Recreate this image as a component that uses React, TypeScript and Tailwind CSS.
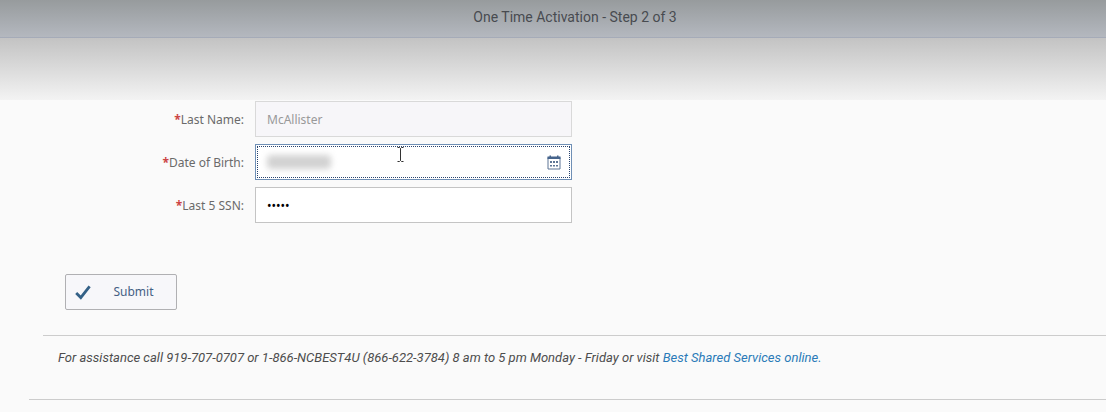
import React, { useState } from 'react';

const fieldClass = 'block h-9 w-full border px-[11px] text-xs';

interface FormRowProps {
  id: string;
  label: string;
  children: React.ReactNode;
}

const FormRow: React.FC<FormRowProps> = ({ id, label, children }) => (
  <div className="flex items-center gap-[11px]">
    <label htmlFor={id} className="w-[244px] shrink-0 pt-px text-right text-xs text-[#6a6a6a]">
      <span className="font-bold text-[#cc4444]">*</span>
      {label}
    </label>
    <div className="relative w-full max-w-[317px]">{children}</div>
  </div>
);

const CalendarIcon: React.FC = () => (
  <svg width="14" height="15" viewBox="0 0 14 15" fill="none" aria-hidden="true">
    <path d="M1 2.5h12v11.5H1z" stroke="#5d7595" />
    <path d="M.5 1.5h13v2.5H.5zM2.5 .5h1.5v1H2.5zM10 .5h1.5v1H10z" fill="#46648c" />
    <path
      d="M3 6h2v2H3zM6 6h2v2H6zM9 6h2v2H9zM3 10h2v1.5H3zM6 10h2v1.5H6zM9 10h2v1.5H9z"
      fill="#5d7595"
    />
  </svg>
);

const CheckIcon: React.FC = () => (
  <svg width="16" height="15" viewBox="0 0 16 15" fill="none" aria-hidden="true">
    <path d="M1.2 8 5.8 12.6 14.6 1.4" stroke="#346187" strokeWidth="2.8" />
  </svg>
);

const TextCursor: React.FC = () => (
  <svg
    className="pointer-events-none absolute left-[142px] top-[3px]"
    width="7"
    height="15"
    viewBox="0 0 7 15"
    fill="none"
    aria-hidden="true"
  >
    <path d="M.5 .5h2l1 1 1-1h2M.5 14.5h2l1-1 1 1h2M3.5 1.5v12" stroke="#333333" />
  </svg>
);

export default function App() {
  const [birthDate, setBirthDate] = useState('');
  const [ssn, setSsn] = useState('12345');

  return (
    <div className="min-h-screen bg-[#fafafa] font-['Noto_Sans','Liberation_Sans',sans-serif]">
      <header className="flex h-[38px] items-center justify-center border-b border-[#a5abb8] bg-linear-to-b from-[#979b9d] to-[#b4b8bf] pb-1 pl-11">
        <h1 className="font-['Roboto','Liberation_Sans',sans-serif] text-sm text-[#484b50]">
          One Time Activation - Step 2 of 3
        </h1>
      </header>
      <div className="h-[62px] bg-linear-to-b from-[#c3c3c3] to-[#f3f3f3]" />

      <main>
        <form onSubmit={(e) => e.preventDefault()}>
          <div className="flex flex-col gap-[7px] pt-px">
            <FormRow id="lastName" label="Last Name:">
              <input
                id="lastName"
                type="text"
                value="McAllister"
                disabled
                className={`${fieldClass} border-[#d9d9d9] bg-[#f7f6f9] text-[#999999]`}
              />
            </FormRow>

            <FormRow id="birthDate" label="Date of Birth:">
              <input
                id="birthDate"
                type="text"
                value={birthDate}
                onChange={(e) => setBirthDate(e.target.value)}
                className={`${fieldClass} border-[#6f8fb5] bg-white pr-10 text-black outline-1 -outline-offset-3 outline-dotted outline-[#28436e]`}
              />
              <span className="pointer-events-none absolute left-3 top-[11px] h-[14px] w-16 rounded-sm bg-[#d2d2d2] blur-[3px]" />
              <TextCursor />
              <button
                type="button"
                aria-label="Open calendar"
                className="absolute right-[11px] top-[11px]"
              >
                <CalendarIcon />
              </button>
            </FormRow>

            <FormRow id="ssn" label="Last 5 SSN:">
              <input
                id="ssn"
                type="password"
                value={ssn}
                onChange={(e) => setSsn(e.target.value)}
                className={`${fieldClass} border-[#c4c4c4] bg-white text-black`}
              />
            </FormRow>
          </div>

          <button
            type="submit"
            className="mt-[51px] ml-[65px] flex h-9 w-28 items-center rounded-xs border border-[#b0b0b3] bg-[#f7f7fa] pl-[9px] text-xs text-[#446084]"
          >
            <CheckIcon />
            <span className="flex-1 text-center">Submit</span>
          </button>
        </form>
      </main>

      <footer>
        <div className="mt-[25px] ml-[43px] border-t border-[#cccccc] px-[15px] pt-3 pb-[31px]">
          <p className="font-['Roboto','Liberation_Sans',sans-serif] text-[13px] leading-5 text-[#4d4d4d] italic">
            For assistance call 919-707-0707 or 1-866-NCBEST4U (866-622-3784) 8 am to 5 pm Monday -
            Friday or visit{' '}
            <a href="#" className="text-[#2a7ab8]">
              Best Shared Services online.
            </a>
          </p>
        </div>
        <div className="ml-[29px] border-t border-[#cccccc]" />
      </footer>
    </div>
  );
}
